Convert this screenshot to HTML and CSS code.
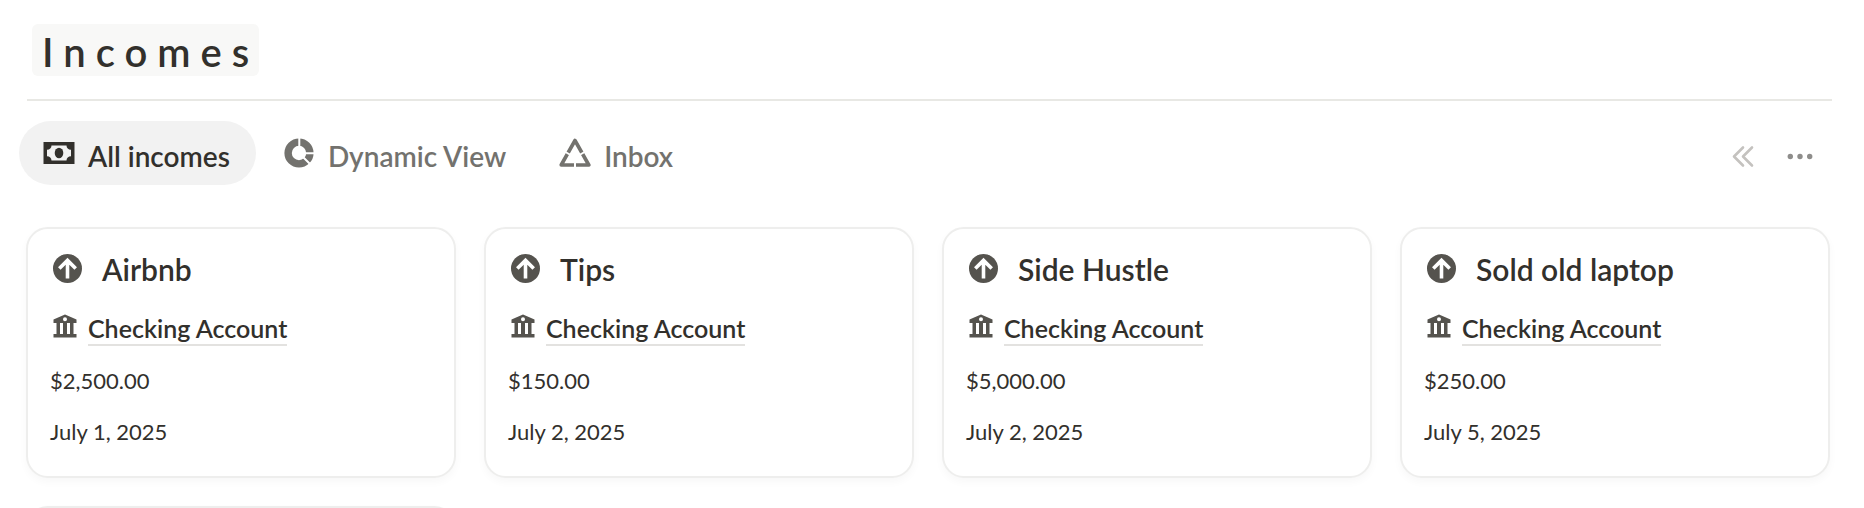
FILE: index.html
```html
<!DOCTYPE html>
<html lang="en">
<head>
    <meta charset="UTF-8">
    <meta name="viewport" content="width=device-width, initial-scale=1.0">
    <title>Incomes</title>
    <link rel="stylesheet" href="styles.css">
</head>
<body>
    <!-- shared icons -->
    <svg class="sprite" aria-hidden="true">
        <symbol id="icon-up" viewBox="0 0 29 29">
            <circle cx="14.5" cy="14.5" r="14.5" fill="currentColor"/>
            <path d="M14.5 24.5V6.5M6.3 14.6l8.2-8.2 8.2 8.2" fill="none" stroke="#fff" stroke-width="3.6"/>
        </symbol>
        <symbol id="icon-bank" viewBox="0 0 24 24">
            <path fill="currentColor" fill-rule="evenodd" d="M12 .5L23.5 5.5V9H20.5V20H23.5V23.5H.5V20H3.5V9H.5V5.5zM12 3.2a2 2 0 1 0 0 4 2 2 0 1 0 0-4zM7 9V20H10V9zM14 9V20H17V9z"/>
        </symbol>
    </svg>

    <main class="page">
        <header class="header">
            <h1 class="title">Incomes</h1>
        </header>

        <nav class="toolbar">
            <div class="tabs" role="tablist">
                <button class="tab active" type="button" role="tab" aria-selected="true">
                    <svg class="tab-icon" viewBox="0 0 32 32">
                        <path fill="currentColor" fill-rule="evenodd" d="M.5 5h31v22H.5zM8.5 8.5c0 2.500-1.800 4.200-4.500 4.200v6.600c2.700 0 4.500 1.700 4.500 4.200h15c0-2.500 1.800-4.200 4.500-4.200v-6.600c-2.700 0-4.500-1.700-4.500-4.200z"/>
                        <ellipse cx="16" cy="16" rx="4.3" ry="5.2" fill="currentColor"/>
                    </svg>
                    <span class="tab-label">All incomes</span>
                </button>
                <button class="tab" type="button" role="tab" aria-selected="false">
                    <svg class="tab-icon" viewBox="0 0 32 32">
                        <circle cx="16" cy="16" r="10.9" fill="none" stroke="currentColor" stroke-width="7.4"/>
                        <path d="M16.3 0v12M20 16.3h12M19 19l9 9" stroke="#fff" stroke-width="2"/>
                    </svg>
                    <span class="tab-label">Dynamic View</span>
                </button>
                <button class="tab" type="button" role="tab" aria-selected="false">
                    <svg class="tab-icon" viewBox="0 0 32 32">
                        <path d="M16 3.5L29.8 28H2.2z" fill="none" stroke="currentColor" stroke-width="3.6" stroke-linejoin="round"/>
                        <path d="M5.5 14.5l7 4M26.5 14.5l-7 4M16 24v8" stroke="#fff" stroke-width="2"/>
                    </svg>
                    <span class="tab-label">Inbox</span>
                </button>
            </div>
            <div class="actions">
                <button class="action" type="button" aria-label="Collapse">
                    <svg class="action-icon light" viewBox="0 0 26 26">
                        <path d="M12 4.500L3 13.500l9 9M21 4.500l-9 9 9 9" fill="none" stroke="currentColor" stroke-width="2.6" stroke-linecap="round" stroke-linejoin="round"/>
                    </svg>
                </button>
                <button class="action" type="button" aria-label="More">
                    <svg class="action-icon" viewBox="0 0 26 26">
                        <circle cx="3.3" cy="13.5" r="2.7" fill="currentColor"/>
                        <circle cx="13" cy="13.5" r="2.7" fill="currentColor"/>
                        <circle cx="22.7" cy="13.5" r="2.7" fill="currentColor"/>
                    </svg>
                </button>
            </div>
        </nav>

        <section class="cards">
            <article class="card">
                <h2 class="card-title"><svg class="card-icon"><use href="#icon-up"/></svg>Airbnb</h2>
                <div class="account"><svg class="account-icon"><use href="#icon-bank"/></svg><a href="#">Checking Account</a></div>
                <p class="value">$2,500.00</p>
                <p class="value">July 1, 2025</p>
            </article>
            <article class="card">
                <h2 class="card-title"><svg class="card-icon"><use href="#icon-up"/></svg>Tips</h2>
                <div class="account"><svg class="account-icon"><use href="#icon-bank"/></svg><a href="#">Checking Account</a></div>
                <p class="value">$150.00</p>
                <p class="value">July 2, 2025</p>
            </article>
            <article class="card">
                <h2 class="card-title"><svg class="card-icon"><use href="#icon-up"/></svg>Side Hustle</h2>
                <div class="account"><svg class="account-icon"><use href="#icon-bank"/></svg><a href="#">Checking Account</a></div>
                <p class="value">$5,000.00</p>
                <p class="value">July 2, 2025</p>
            </article>
            <article class="card">
                <h2 class="card-title"><svg class="card-icon"><use href="#icon-up"/></svg>Sold old laptop</h2>
                <div class="account"><svg class="account-icon"><use href="#icon-bank"/></svg><a href="#">Checking Account</a></div>
                <p class="value">$250.00</p>
                <p class="value">July 5, 2025</p>
            </article>
            <article class="card"></article>
        </section>
    </main>
</body>
</html>
```

FILE: styles.css
```css
* {
    box-sizing: border-box;
}

body {
    margin: 0;
    background: #fff;
    color: #32302c;
    font-family: Lato, "Open Sans", sans-serif;
}

button {
    border: none;
    background: none;
    font: inherit;
    cursor: pointer;
}

.sprite {
    display: none;
}

.page {
    height: 100vh;
    overflow: hidden;
    padding: 24px 34px 0 26px;
}

.header {
    margin: 0 -2px 0 1px;
    padding: 0 5px 23px;
    border-bottom: 2px solid #e8e8e4;
}

.title {
    display: inline-block;
    margin: 0;
    padding: 4px 0 0 10px;
    border-radius: 6px;
    background: #f8f8f7;
    font-size: 40px;
    line-height: 48px;
    font-weight: 600;
    letter-spacing: 10px;
    vertical-align: top;
}

.toolbar {
    display: flex;
    justify-content: space-between;
    align-items: center;
    margin: 20px 0 42px -7px;
}

.tabs {
    display: flex;
    gap: 3px;
}

.tab {
    display: flex;
    align-items: center;
    gap: 13px;
    height: 64px;
    padding: 0 26px 0 24px;
    border-radius: 32px;
    color: #73726e;
    font-size: 28px;
    font-weight: 600;
}

.tab.active {
    background: #f2f2f2;
    color: #32302c;
}

.tab-icon {
    width: 32px;
    height: 32px;
}

.tab-label {
    padding-top: 6px;
}

.actions {
    display: flex;
    gap: 30px;
    padding: 6px 17px 0 0;
}

.action {
    padding: 0;
    color: #8e8d8b;
}

.action-icon {
    display: block;
    width: 26px;
    height: 26px;
}

.light {
    color: #c4c2bf;
}

.cards {
    display: grid;
    grid-template-columns: repeat(4, 1fr);
    gap: 28px;
}

.card {
    min-height: 251px;
    padding: 22px 22px 9px;
    border: 2px solid #eeeeed;
    border-radius: 22px;
    background: #fff;
    box-shadow: 0 4px 8px rgba(0, 0, 0, 0.03);
}

.card-title {
    display: flex;
    align-items: center;
    gap: 20px;
    margin: 0 0 25px 3px;
    font-size: 30px;
    line-height: 36px;
    font-weight: 600;
}

.card-icon {
    width: 29px;
    height: 29px;
    margin-bottom: 2px;
    color: #55534e;
}

.account {
    display: flex;
    align-items: center;
    gap: 11px;
    margin: 0 0 19px 3px;
}

.account-icon {
    width: 24px;
    height: 24px;
    margin-bottom: 6px;
    color: #55534e;
}

.account a {
    border-bottom: 2px solid #e3e2e0;
    color: #32302c;
    font-size: 25px;
    line-height: 32px;
    font-weight: 600;
    text-decoration: none;
}

.value {
    margin: 0 0 19px;
    font-size: 22px;
    line-height: 32px;
}
```
